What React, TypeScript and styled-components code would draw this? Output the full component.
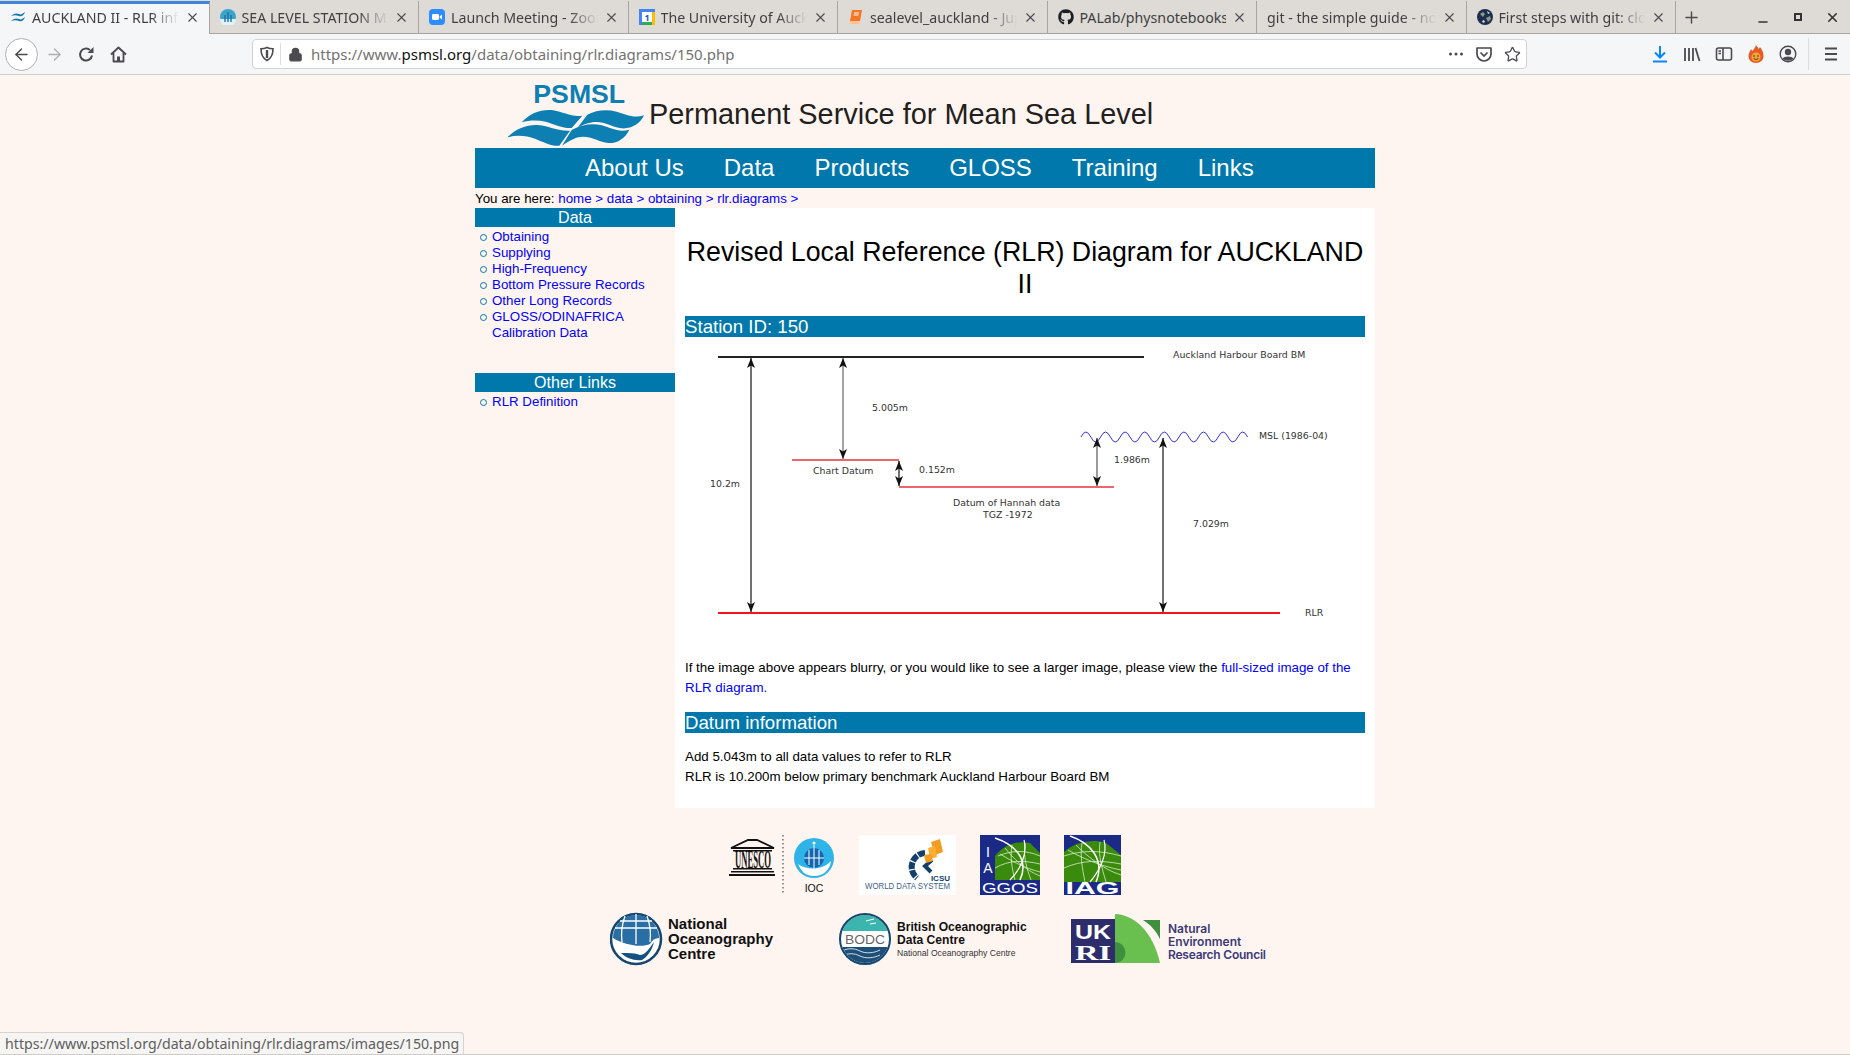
import React from 'react';
import styled, { createGlobalStyle } from 'styled-components';
import { ArrowLeft, ArrowRight, Lock, Minus, Plus, Star, X } from 'lucide-react';
import { FaGithub } from 'react-icons/fa';

const BLUE = '#0078ab';
const GREY = '#4a4a4f';

const GlobalStyle = createGlobalStyle`
    html, body {
        margin: 0;
        padding: 0;
        background: #fff5f0;
    }
    * {
        box-sizing: border-box;
    }
`;

const Shell = styled.div`
    position: relative;
    width: 1850px;
    height: 1055px;
    overflow: hidden;
    background: #fff5f0;
    font-family: "Liberation Sans", Arial, sans-serif;
    border-bottom: 1px solid #cfcdca;
`;

/* browser chrome */
const TabStrip = styled.div`
    display: flex;
    height: 34px;
    padding-top: 1px;
    background: #dedad6;
    border-bottom: 1px solid #a7a5a1;
`;

const Tab = styled.div<{ $active?: boolean }>`
    display: flex;
    align-items: center;
    flex: 0 0 209.5px;
    width: 209.5px;
    min-width: 0;
    height: ${p => (p.$active ? '33px' : '32px')};
    padding: ${p => (p.$active ? '0 9px 4px 10px' : '0 9px 0 10px')};
    gap: 6px;
    color: #3f3f42;
    background: ${p => (p.$active ? '#f5f6f7' : 'transparent')};
    border-top: ${p => (p.$active ? '3px solid #3d87dc' : 'none')};
    border-right: 1px solid #a7a5a1;
    font-family: "Noto Sans", sans-serif;
    font-size: 14.2px;
`;

const TabTitle = styled.span<{ $full?: boolean }>`
    flex: 1;
    min-width: 0;
    overflow: hidden;
    white-space: nowrap;
    mask-image: ${p => (p.$full ? 'none' : 'linear-gradient(to right, #000 80%, transparent 100%)')};
`;

const NewTab = styled.div`
    display: flex;
    align-items: center;
    justify-content: center;
    width: 31px;
    color: ${GREY};
`;

const WindowControls = styled.div`
    display: flex;
    align-items: center;
    gap: 20.5px;
    margin-left: auto;
    padding-right: 10px;
    color: #333;
    & > svg:first-child {
        margin-top: 9px;
    }
`;

const Toolbar = styled.div`
    display: flex;
    align-items: center;
    height: 41px;
    padding-left: 5px;
    background: #f5f6f7;
    border-bottom: 1px solid #cfcecb;
`;

const BackButton = styled.div`
    display: flex;
    align-items: center;
    justify-content: center;
    width: 33px;
    height: 33px;
    border: 1px solid #b1b1b3;
    border-radius: 50%;
    background: #fff;
    color: ${GREY};
`;

const ToolIcon = styled.div<{ $off?: boolean }>`
    display: flex;
    align-items: center;
    justify-content: center;
    flex: 0 0 32px;
    height: 32px;
    color: ${p => (p.$off ? '#b1b1b3' : GREY)};
`;

const UrlBar = styled.div`
    display: flex;
    align-items: center;
    width: 1275px;
    height: 30px;
    margin-left: 118px;
    padding: 0 5px 0 6px;
    background: #fff;
    border: 1px solid #d2d2d2;
    border-radius: 4px;
    color: ${GREY};
`;

const UrlDivider = styled.span`
    width: 1px;
    height: 22px;
    margin: 0 7px 0 5px;
    background: #dcdcdc;
`;

const UrlText = styled.span`
    margin-left: 8px;
    color: #737373;
    font-family: "Noto Sans", sans-serif;
    font-size: 15px;
    white-space: nowrap;
    b {
        color: #111;
        font-weight: 400;
    }
`;

const UrlActions = styled.div`
    display: flex;
    align-items: center;
    gap: 11px;
    margin-left: auto;
`;

const RightTools = styled.div`
    display: flex;
    align-items: center;
    margin-left: 117px;
`;

const ToolSeparator = styled.span`
    width: 1px;
    height: 32px;
    margin: 0 6px 0 4px;
    background: #dcdcdc;
`;

/* page */
const Wrapper = styled.div`
    width: 900px;
    margin: 0 auto;
    color: #000;
`;

const Header = styled.header`
    display: flex;
    height: 73px;
    padding: 3px 0 0 25px;
`;

const SiteTitle = styled.div`
    margin: 20px 0 0 1px;
    color: #231f20;
    font-size: 28.9px;
    line-height: 33px;
    white-space: nowrap;
`;

const Nav = styled.nav`
    display: flex;
    align-items: center;
    gap: 40px;
    height: 40px;
    padding-left: 110px;
    background: ${BLUE};
    color: #fff;
    font-size: 24px;
`;

const Breadcrumb = styled.div`
    height: 20px;
    font-size: 13.33px;
    line-height: 22px;
    a {
        color: #0000ff;
    }
`;

const Columns = styled.div`
    display: flex;
    align-items: flex-start;
`;

const Sidebar = styled.aside`
    flex: 0 0 200px;
`;

const SideTitle = styled.div`
    height: 19px;
    background: ${BLUE};
    color: #fff;
    font-size: 16px;
    line-height: 19px;
    text-align: center;
`;

const SideList = styled.ul<{ $gapBelow?: boolean }>`
    margin: 2px 0 ${p => (p.$gapBelow ? '32px' : '0')};
    padding: 0;
    list-style: none;
`;

const SideItem = styled.li`
    position: relative;
    padding-left: 17px;
    color: #0000ff;
    font-size: 13.33px;
    line-height: 16px;
    &::before {
        content: "";
        position: absolute;
        left: 5px;
        top: 5px;
        width: 5px;
        height: 5px;
        border: 1px solid ${BLUE};
        border-radius: 50%;
    }
`;

const Main = styled.main`
    flex: 1;
    height: 600px;
    padding: 28px 10px 0;
    background: #fff;
`;

const Heading = styled.h1`
    margin: 0 0 16px;
    font-size: 26.75px;
    font-weight: 400;
    line-height: 32px;
    text-align: center;
`;

const SectionBar = styled.h2`
    height: 21px;
    margin: 0;
    background: ${BLUE};
    color: #fff;
    font-size: 18.67px;
    font-weight: 400;
    line-height: 21px;
`;

const Diagram = styled.svg`
    display: block;
    width: 680px;
    height: 310px;
    margin: 5px 0 6px;
    font-family: "DejaVu Sans", sans-serif;
    font-size: 9.4px;
`;

const Paragraph = styled.p<{ $after?: number }>`
    margin: 0 0 ${p => p.$after ?? 0}px;
    font-size: 13.33px;
    line-height: 20px;
    a {
        color: #0000ff;
    }
`;

const DatumText = styled.div`
    margin-top: 14px;
`;

const LogoRow = styled.div`
    display: flex;
    justify-content: center;
    align-items: flex-start;
`;

const PartnerRow = styled(LogoRow)`
    gap: 24px;
    margin-top: 27px;
`;

const CentreRow = styled(LogoRow)`
    gap: 40px;
    margin-top: 16px;
    padding-left: 28px;
`;

const LogoSvg = styled.svg`
    display: block;
    font-family: "Liberation Sans", Arial, sans-serif;
`;

const StatusBar = styled.div`
    position: absolute;
    left: 0;
    bottom: 0;
    width: 464px;
    height: 22px;
    padding-left: 5px;
    background: #f6f5f3;
    border: 1px solid #d5d3d0;
    border-left: none;
    border-bottom: none;
    border-top-right-radius: 4px;
    color: #5e5e5e;
    font-family: "Noto Sans", sans-serif;
    font-size: 14.2px;
    line-height: 22px;
    white-space: nowrap;
`;

/* small drawings */
const PsmslFavicon = () => (
    <svg width="16" height="16" viewBox="0 0 16 16">
        <path d="M1 7c3-3 6-3 8-2s3 0 6-2c-1 3-3 5-6 4S4 6 1 7z" fill="#1478b0" />
        <path d="M1 12c3-3 6-3 8-2s3 0 6-2c-1 3-3 5-6 4s-5-1-8 0z" fill="#1478b0" />
    </svg>
);

const SeaFavicon = () => (
    <svg width="16" height="16" viewBox="0 0 16 16">
        <circle cx="8" cy="8" r="8" fill="#3aa5c9" />
        <path d="M0 10h16a8 8 0 0 1-16 0z" fill="#dff2f7" />
        <path d="M8 3v10M5 6v7M11 6v7" stroke="#1d6fa5" strokeWidth="1.4" />
    </svg>
);

const ZoomFavicon = () => (
    <svg width="16" height="16" viewBox="0 0 16 16">
        <rect width="16" height="16" rx="4" fill="#2d8cff" />
        <rect x="3" y="5" width="7" height="6" rx="1.4" fill="#fff" />
        <path d="M10.6 7.4 13 5.6v4.8l-2.4-1.8z" fill="#fff" />
    </svg>
);

const CalendarFavicon = () => (
    <svg width="16" height="16" viewBox="0 0 16 16">
        <rect width="16" height="16" fill="#fff" />
        <path d="M0 0h16v3H0z" fill="#4285f4" />
        <path d="M0 0h3v16H0z" fill="#4285f4" />
        <path d="M13 3h3v13h-3z" fill="#fbbc04" />
        <path d="M3 13h10v3H3z" fill="#34a853" />
        <text x="8" y="12" fontSize="9" fontWeight="700" textAnchor="middle" fill="#1a57b8">1</text>
    </svg>
);

const BookFavicon = () => (
    <svg width="16" height="16" viewBox="0 0 16 16">
        <path d="M4 1h10l-2 11H2z" fill="#f37726" />
        <path d="M2 12h10l-.5 3H2.500z" fill="#ffc48e" />
        <path d="M6 4h5M5.500 6h5" stroke="#fff" strokeWidth="1" />
    </svg>
);

const GlobeFavicon = () => (
    <svg width="16" height="16" viewBox="0 0 16 16">
        <circle cx="8" cy="8" r="8" fill="#1e2c4f" />
        <path d="M3 5l3-2 2 2-2 3zM9 9l4-2 1 3-3 3z" fill="#8c9a7a" />
        <path d="M5 12l2-1 1 2-2 1zM10 2l3 2-2 1z" fill="#d8dde0" />
    </svg>
);

const ReloadIcon = () => (
    <svg width="17" height="17" viewBox="0 0 17 17" fill="none" stroke={GREY} strokeWidth="2">
        <path d="M14 9.500a6 6 0 1 1-2-5.500" />
        <path d="M15.500 1v6h-6z" fill={GREY} stroke="none" />
    </svg>
);

const HomeIcon = () => (
    <svg width="17" height="17" viewBox="0 0 17 17" fill="none" stroke={GREY} strokeWidth="1.800">
        <path d="M1 8.500 8.500 1.500 16 8.500M3.500 7v8.500h10V7" strokeLinejoin="round" />
        <rect x="7" y="10.500" width="3" height="5" fill={GREY} stroke="none" />
    </svg>
);

const ShieldIcon = () => (
    <svg width="16" height="16" viewBox="0 0 16 16" fill="none" stroke={GREY} strokeWidth="1.6">
        <path d="M8 1.500c2 1 4 1.300 6 1.300 0 5.500-1.500 9.500-6 11.700C3.500 12.300 2 8.300 2 2.800c2 0 4-.3 6-1.300z" />
        <path d="M8 4v8" strokeWidth="2.400" />
    </svg>
);

const PocketIcon = () => (
    <svg width="18" height="18" viewBox="0 0 18 18" fill="none" stroke={GREY} strokeWidth="1.7">
        <path d="M2 3h14v6a7 7 0 0 1-14 0z" strokeLinejoin="round" />
        <path d="M5.500 7.500 9 11l3.500-3.500" />
    </svg>
);

const DownloadIcon = () => (
    <svg width="18" height="18" viewBox="0 0 18 18" fill="none" stroke="#0a84ff" strokeWidth="2">
        <path d="M9 1v11M4 7.500 9 12.500l5-5M2 16.500h14" />
    </svg>
);

const LibraryIcon = () => (
    <svg width="18" height="18" viewBox="0 0 18 18" fill="none" stroke={GREY} strokeWidth="1.8">
        <path d="M2 3v13M6 3v13M10 3v13M12.500 3l4 13" />
    </svg>
);

const SidebarIcon = () => (
    <svg width="18" height="18" viewBox="0 0 18 18" fill="none" stroke={GREY} strokeWidth="1.600">
        <rect x="1.500" y="3" width="15" height="12" rx="2" />
        <path d="M8 3v12M3.500 6H6M3.500 8.500H6" />
    </svg>
);

const FlameIcon = () => (
    <svg width="18" height="18" viewBox="0 0 18 18">
        <path d="M9 0c1 2 2 2 2.500 4 1-1 1.500-1.500 1.500-2 2 3 3.500 5 3.500 9 0 4-3 7-7.500 7s-7.500-3-7.500-7c0-3 1.500-4.500 2.500-7 .5 1 1 1.500 1.500 2C7 4 8.500 2 9 0z" fill="#ea5a24" />
        <circle cx="9" cy="12" r="4.500" fill="#f2a63a" />
        <circle cx="7" cy="11" r=".8" fill="#4a2a10" />
        <circle cx="11" cy="11" r=".8" fill="#4a2a10" />
        <path d="M6.500 13c1.500 2 3.500 2 5 0" stroke="#4a2a10" fill="none" />
    </svg>
);

const AccountIcon = () => (
    <svg width="18" height="18" viewBox="0 0 18 18">
        <circle cx="9" cy="9" r="7.800" fill="none" stroke={GREY} strokeWidth="1.400" />
        <circle cx="9" cy="7" r="3.200" fill={GREY} />
        <path d="M3.500 13.500C5 10.800 13 10.800 14.500 13.500 11.500 16.500 6.500 16.500 3.500 13.500z" fill={GREY} />
    </svg>
);

const MenuIcon = () => (
    <svg width="18" height="18" viewBox="0 0 18 18" stroke={GREY} strokeWidth="1.800">
        <path d="M3 3.500h12M3 9h12M3 14.500h12" />
    </svg>
);

const Dots = () => (
    <svg width="16" height="16" viewBox="0 0 16 16" fill={GREY}>
        <circle cx="2.500" cy="8" r="1.500" />
        <circle cx="8" cy="8" r="1.500" />
        <circle cx="13.500" cy="8" r="1.500" />
    </svg>
);

const PsmslLogo = () => (
    <LogoSvg width="148" height="70" viewBox="0 0 444 210">
        <text x="100" y="75" fontSize="80" fontWeight="700" fill="#0d7fb2">PSMSL</text>
        <g fill="#0d7fb2">
            <path d="M65 133C90 105 125 93 160 97C190 102 215 118 247 113L215 150C190 152 165 140 140 132C115 126 90 126 65 133Z" />
            <path d="M262 110C290 96 320 93 350 101C375 108 400 122 432 112C420 138 395 153 365 151C340 148 315 132 290 132C275 132 255 136 232 150Z" />
            <path d="M22 178C50 150 85 138 120 142C150 146 175 160 210 158L178 203C155 205 130 192 105 182C80 173 50 170 22 178Z" />
            <path d="M215 156C245 140 275 135 305 142C330 148 355 165 388 155C375 182 350 197 325 195C300 192 275 176 250 176C230 176 210 186 186 203Z" />
        </g>
    </LogoSvg>
);

const UnescoIoc = () => (
    <LogoSvg width="106" height="60" viewBox="729 835 106 60">
        <path d="M748 840h9l17 8h-43z" fill="none" stroke="#111" strokeWidth="1.800" />
        <text x="735" y="868" fontSize="25" fontWeight="700" textLength="36" lengthAdjust="spacingAndGlyphs" fill="#111" fontFamily="'Liberation Serif', serif">UNESCO</text>
        <rect x="733" y="850" width="39" height="1.500" fill="#111" />
        <rect x="733" y="868" width="39" height="1.500" fill="#111" />
        <rect x="731" y="871" width="43" height="1.500" fill="#111" />
        <rect x="729" y="874" width="46" height="2" fill="#111" />
        <path d="M783 835v60" stroke="#333" strokeDasharray="1.500 2.500" />
        <circle cx="814" cy="858" r="20" fill="#2fb4e8" />
        <path d="M798 864c8 6 24 7 33-3-1 9-8 15-17 15s-13-5-16-12z" fill="#fff" />
        <circle cx="814" cy="858" r="10" fill="#1566b0" />
        <path d="M814 845v24M804 858h20M809 850v15M819 850v15" stroke="#fff" strokeWidth="1" />
        <circle cx="814" cy="843" r="1.500" fill="#fff" />
        <text x="814" y="892" fontSize="10.500" textAnchor="middle" fill="#111">IOC</text>
    </LogoSvg>
);

const WorldData = () => (
    <LogoSvg width="97" height="60" viewBox="858 835 97 60">
        <rect x="858" y="835" width="97" height="60" fill="#fff" />
        <path d="M924 853A14 14 0 0 0 916 878" fill="none" stroke="#143f6b" strokeWidth="6" strokeDasharray="7 1.200" />
        <path d="M931 860 924 866 930 872" fill="none" stroke="#143f6b" strokeWidth="4" />
        <path d="M930 842l9-3 3 13-8 3z" fill="#f39c1f" />
        <path d="M927 848l7-2 2 11-7 2z" fill="#f7b033" />
        <path d="M923 855l7-1 2 7-7 2z" fill="#f39c1f" />
        <text x="949" y="881" fontSize="8" fontWeight="700" textAnchor="end" fill="#143f6b">ICSU</text>
        <text x="864" y="889" fontSize="8.500" textLength="85" lengthAdjust="spacingAndGlyphs" fill="#3d5e85">WORLD DATA SYSTEM</text>
    </LogoSvg>
);

const Ggos = () => (
    <LogoSvg width="60" height="60" viewBox="980 835 60 60">
        <rect x="980" y="835" width="60" height="60" fill="#1b2a86" />
        <path d="M995 880v-24c8-11 22-16 35-13l10 10v27z" fill="#3a8a0d" />
        <path d="M995 868c14-8 28-8 45-4M998 856c14-6 28-6 42 0M1000 854c10 6 24 14 40 18M1005 848c8 10 20 22 35 28M1012 845c-2 12 0 24 3 35M1025 843c-2 14 2 26 6 37" stroke="#d7ecc5" strokeWidth=".8" fill="none" />
        <path d="M995 838c18 6 35 20 25 42" stroke="#fff" strokeWidth="1.500" fill="none" />
        <path d="M1024 840c4 14-4 30-14 40" stroke="#fff" strokeWidth="1.200" fill="none" />
        <text x="988" y="857" fontSize="14" textAnchor="middle" fill="#fff">I</text>
        <text x="988" y="873" fontSize="14" textAnchor="middle" fill="#fff">A</text>
        <text x="1010" y="893" fontSize="14.500" textAnchor="middle" textLength="56" lengthAdjust="spacingAndGlyphs" fill="#fff">GGOS</text>
    </LogoSvg>
);

const Iag = () => (
    <LogoSvg width="57" height="60" viewBox="1064 835 57 60">
        <rect x="1064" y="835" width="57" height="60" fill="#1b2a86" />
        <path d="M1064 882v-30c12-11 30-13 42-9l15 12v27z" fill="#3a8a0d" />
        <path d="M1064 868c18-8 36-8 57-4M1064 856c18-6 36-6 57 0M1068 850c14 8 32 16 53 20M1076 845c10 10 26 24 45 30M1082 843c-2 12 0 24 3 39M1100 842c-2 14 2 26 6 40" stroke="#d7ecc5" strokeWidth=".8" fill="none" />
        <path d="M1070 836c18 6 36 22 26 46" stroke="#fff" strokeWidth="1.500" fill="none" />
        <path d="M1104 840c4 14-4 30-14 42" stroke="#fff" strokeWidth="1.200" fill="none" />
        <text x="1092.500" y="894" fontSize="17" fontWeight="700" textAnchor="middle" textLength="54" lengthAdjust="spacingAndGlyphs" fill="#fff">IAG</text>
    </LogoSvg>
);

const NocLogo = () => (
    <LogoSvg width="189" height="56" viewBox="610 911 189 56">
        <circle cx="636" cy="939" r="25" fill="#fff" stroke="#14466f" strokeWidth="2.500" />
        <path d="M613 938a23 23 0 0 1 46 0c-4 0-7 2-9 6-8 4-26 1-37-6z" fill="#2a6ea6" />
        <path d="M636 914v30M625 916c-3 8-4 18-3 26M647 916c3 8 4 18 3 26M615 928h42M620 921h32" stroke="#fff" strokeWidth="1.300" fill="none" />
        <path d="M654 942c-2 8-6 14-12 18-8 1-16-2-21-7 8 0 14 0 19 2 5 0 9-6 14-13z" fill="#15527f" />
        <g fontSize="15" fontWeight="700" fill="#111">
            <text x="668" y="929">National</text>
            <text x="668" y="944">Oceanography</text>
            <text x="668" y="959">Centre</text>
        </g>
    </LogoSvg>
);

const BodcLogo = () => (
    <LogoSvg width="192" height="56" viewBox="839 911 192 56">
        <clipPath id="bodc-disc">
            <circle cx="865" cy="939" r="24" />
        </clipPath>
        <g clipPath="url(#bodc-disc)">
            <rect x="840" y="914" width="50" height="50" fill="#fff" />
            <rect x="840" y="914" width="50" height="17" fill="#3bb5ad" />
            <rect x="840" y="947" width="50" height="18" fill="#1d4f79" />
            <path d="M842 951c6-3 12-3 18 0s14 2 20-1M842 956c6-3 12-3 18 0s14 2 20-1" stroke="#fff" fill="none" strokeWidth=".8" />
            <path d="M866 921l8-2M870 924l6-1" stroke="#fff" strokeWidth="1" />
        </g>
        <circle cx="865" cy="939" r="25" fill="none" stroke="#14466f" strokeWidth="2" />
        <text x="865" y="944" fontSize="12.500" textAnchor="middle" textLength="40" lengthAdjust="spacingAndGlyphs" fill="#666">BODC</text>
        <g fontSize="12.100" fontWeight="700" fill="#111">
            <text x="897" y="931">British Oceanographic</text>
            <text x="897" y="944">Data Centre</text>
        </g>
        <text x="897" y="956" fontSize="8.600" fill="#333">National Oceanography Centre</text>
    </LogoSvg>
);

const UkriLogo = () => (
    <LogoSvg width="197" height="56" viewBox="1071 911 197 56">
        <rect x="1071" y="919" width="44" height="44" fill="#2e2d6b" />
        <path d="M1115 914c20 1 38 18 45 49h-45z" fill="#69c04f" />
        <path d="M1143 920c8 5 13 11 17 19v-19z" fill="#3f8f3f" />
        <path d="M1115 942a10.500 10.500 0 0 1 0 21z" fill="#3f8f3f" />
        <text x="1093" y="939" fontSize="21" fontWeight="700" textAnchor="middle" textLength="36" lengthAdjust="spacingAndGlyphs" fill="#fff">UK</text>
        <text x="1093" y="960" fontSize="21" fontWeight="700" textAnchor="middle" textLength="36" lengthAdjust="spacingAndGlyphs" fill="#fff" fontFamily="'Liberation Serif', serif">RI</text>
        <g fontSize="12" fontWeight="600" fill="#3a3a78" fontFamily="Inter, sans-serif">
            <text x="1168" y="933">Natural</text>
            <text x="1168" y="946">Environment</text>
            <text x="1168" y="959" textLength="98">Research Council</text>
        </g>
    </LogoSvg>
);

const arrowHead = (x: number, y: number, dir: 1 | -1) =>
    `M${x} ${y}l-4 ${10 * dir}l4 ${-2.500 * dir}l4 ${2.500 * dir}z`;

const arrows = [
    { x: 751, top: 358, bottom: 612, stroke: '#111' },
    { x: 843, top: 358, bottom: 459, stroke: '#666' },
    { x: 899, top: 461, bottom: 486, stroke: '#111' },
    { x: 1097, top: 438, bottom: 486, stroke: '#555' },
    { x: 1163, top: 438, bottom: 612, stroke: '#111' },
];

const labels = [
    { x: 1173, y: 358, text: 'Auckland Harbour Board BM' },
    { x: 872, y: 411, text: '5.005m' },
    { x: 1259, y: 439, text: 'MSL (1986-04)' },
    { x: 813, y: 474, text: 'Chart Datum' },
    { x: 919, y: 473, text: '0.152m' },
    { x: 1114, y: 463, text: '1.986m' },
    { x: 710, y: 487, text: '10.2m' },
    { x: 953, y: 506, text: 'Datum of Hannah data' },
    { x: 983, y: 518, text: 'TGZ -1972' },
    { x: 1193, y: 527, text: '7.029m' },
    { x: 1305, y: 616, text: 'RLR' },
];

// the msl squiggle: 8.5 periods of about 20px
const wave = (() => {
    let d = 'M1081 437';
    for (let i = 0; i < 17; i++) {
        d += ` q4.900 ${i % 2 ? 10 : -10} 9.800 0`;
    }
    return d;
})();

const RlrDiagram = () => (
    <Diagram viewBox="685 342 680 310">
        <path d="M718 357H1144" stroke="#222" strokeWidth="2" />
        <path d="M718 613H1280" stroke="#f0141e" strokeWidth="2" />
        <path d="M792 460H899M899 487H1114" stroke="#e8323c" strokeWidth="1.500" />
        <path d={wave} stroke="#3333dd" fill="none" strokeWidth="1" />
        {arrows.map(a => (
            <g key={a.x}>
                <path d={`M${a.x} ${a.top}V${a.bottom}`} stroke={a.stroke} strokeWidth="1.200" />
                <path d={arrowHead(a.x, a.top, 1)} fill="#111" />
                <path d={arrowHead(a.x, a.bottom, -1)} fill="#111" />
            </g>
        ))}
        {labels.map(l => (
            <text key={l.text} x={l.x} y={l.y} fill="#333">{l.text}</text>
        ))}
    </Diagram>
);

const tabs = [
    { title: 'AUCKLAND II - RLR info', icon: <PsmslFavicon />, active: true },
    { title: 'SEA LEVEL STATION METADATA', icon: <SeaFavicon /> },
    { title: 'Launch Meeting - Zoom', icon: <ZoomFavicon /> },
    { title: 'The University of Auckland', icon: <CalendarFavicon /> },
    { title: 'sealevel_auckland - Jupyter', icon: <BookFavicon /> },
    { title: 'PALab/physnotebooks', icon: <FaGithub size={16} color="#1b1f23" />, full: true },
    { title: 'git - the simple guide - no deep shit', icon: null },
    { title: 'First steps with git: clone', icon: <GlobeFavicon /> },
];

const navItems = ['About Us', 'Data', 'Products', 'GLOSS', 'Training', 'Links'];

const dataLinks = [
    'Obtaining',
    'Supplying',
    'High-Frequency',
    'Bottom Pressure Records',
    'Other Long Records',
    'GLOSS/ODINAFRICA Calibration Data',
];

export default function App() {
    return (
        <Shell>
            <GlobalStyle />

            <TabStrip>
                {tabs.map(t => (
                    <Tab key={t.title} $active={t.active}>
                        {t.icon}
                        <TabTitle $full={t.full}>{t.title}</TabTitle>
                        <X size={15} strokeWidth={1.8} color={GREY} />
                    </Tab>
                ))}
                <NewTab><Plus size={19} strokeWidth={1.8} /></NewTab>
                <WindowControls>
                    <Minus size={14} strokeWidth={2.5} />
                    <svg width="14" height="14" viewBox="0 0 14 14" fill="none" stroke="#333" strokeWidth="2">
                        <rect x="4" y="4" width="6" height="6" />
                    </svg>
                    <X size={15} strokeWidth={2.5} />
                </WindowControls>
            </TabStrip>

            <Toolbar>
                <BackButton><ArrowLeft size={19} strokeWidth={1.8} /></BackButton>
                <ToolIcon $off><ArrowRight size={19} strokeWidth={1.8} /></ToolIcon>
                <ToolIcon><ReloadIcon /></ToolIcon>
                <ToolIcon><HomeIcon /></ToolIcon>
                <UrlBar>
                    <ShieldIcon />
                    <UrlDivider />
                    <Lock size={15} fill={GREY} />
                    <UrlText>https://www.<b>psmsl.org</b>/data/obtaining/rlr.diagrams/150.php</UrlText>
                    <UrlActions>
                        <Dots />
                        <PocketIcon />
                        <Star size={17} strokeWidth={1.8} />
                    </UrlActions>
                </UrlBar>
                <RightTools>
                    <ToolIcon><DownloadIcon /></ToolIcon>
                    <ToolIcon><LibraryIcon /></ToolIcon>
                    <ToolIcon><SidebarIcon /></ToolIcon>
                    <ToolIcon><FlameIcon /></ToolIcon>
                    <ToolIcon><AccountIcon /></ToolIcon>
                    <ToolSeparator />
                    <ToolIcon><MenuIcon /></ToolIcon>
                </RightTools>
            </Toolbar>

            <Wrapper>
                <Header>
                    <PsmslLogo />
                    <SiteTitle>Permanent Service for Mean Sea Level</SiteTitle>
                </Header>

                <Nav>
                    {navItems.map(n => <span key={n}>{n}</span>)}
                </Nav>

                <Breadcrumb>
                    You are here: <a>home &gt;</a> <a>data &gt;</a> <a>obtaining &gt;</a> <a>rlr.diagrams &gt;</a>
                </Breadcrumb>

                <Columns>
                    <Sidebar>
                        <SideTitle>Data</SideTitle>
                        <SideList $gapBelow>
                            {dataLinks.map(l => <SideItem key={l}>{l}</SideItem>)}
                        </SideList>
                        <SideTitle>Other Links</SideTitle>
                        <SideList>
                            <SideItem>RLR Definition</SideItem>
                        </SideList>
                    </Sidebar>

                    <Main>
                        <Heading>Revised Local Reference (RLR) Diagram for AUCKLAND II</Heading>
                        <SectionBar>Station ID: 150</SectionBar>
                        <RlrDiagram />
                        <Paragraph $after={14}>
                            If the image above appears blurry, or you would like to see a larger image, please view the <a>full-sized image of the RLR diagram.</a>
                        </Paragraph>
                        <SectionBar>Datum information</SectionBar>
                        <DatumText>
                            <Paragraph>Add 5.043m to all data values to refer to RLR</Paragraph>
                            <Paragraph>RLR is 10.200m below primary benchmark Auckland Harbour Board BM</Paragraph>
                        </DatumText>
                    </Main>
                </Columns>
            </Wrapper>

            <PartnerRow>
                <UnescoIoc />
                <WorldData />
                <Ggos />
                <Iag />
            </PartnerRow>

            <CentreRow>
                <NocLogo />
                <BodcLogo />
                <UkriLogo />
            </CentreRow>

            <StatusBar>https://www.psmsl.org/data/obtaining/rlr.diagrams/images/150.png</StatusBar>
        </Shell>
    );
}
